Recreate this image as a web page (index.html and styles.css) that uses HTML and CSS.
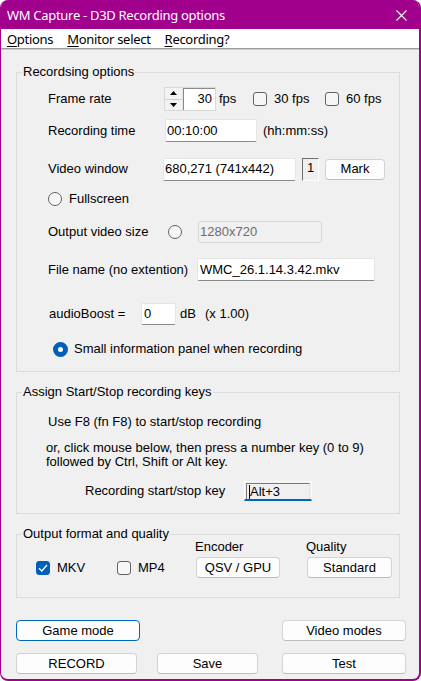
FILE: index.html
```html
<!DOCTYPE html>
<html lang="en">
<head>
<meta charset="utf-8">
<title>WM Capture - D3D Recording options</title>
<link rel="stylesheet" href="styles.css">
</head>
<body>
<div class="window">
  <div class="titlebar">
    <span class="title">WM Capture - D3D Recording options</span>
    <svg class="close" width="11" height="11" viewBox="0 0 11 11"><path d="M0.5 0.5L10.5 10.5M10.5 0.5L0.5 10.5" stroke="#fff" stroke-width="1.1" fill="none"/></svg>
  </div>
  <div class="menubar">
    <span class="menu"><u>O</u>ptions</span>
    <span class="menu"><u>M</u>onitor select</span>
    <span class="menu"><u>R</u>ecording?</span>
  </div>

  <div class="client">
    <fieldset class="group rec">
      <legend>Recordsing options</legend>

      <div class="row r-rate">
        <span class="lbl lbl-rate">Frame rate</span>
        <div class="spin">
          <div class="spin-btns">
            <span class="spin-btn"><svg width="7" height="4" viewBox="0 0 7 4"><path d="M3.5 0L7 4H0z" fill="#000"/></svg></span>
            <span class="spin-btn"><svg width="7" height="4" viewBox="0 0 7 4"><path d="M0 0H7L3.5 4z" fill="#000"/></svg></span>
          </div>
          <div class="spin-val">30</div>
        </div>
        <span class="fps-unit">fps</span>
        <label class="check c30"><span class="box"></span>30 fps</label>
        <label class="check"><span class="box"></span>60 fps</label>
      </div>

      <div class="row r-time">
        <span class="lbl lbl-time">Recording time</span>
        <div class="field f-time">00:10:00</div>
        <span class="hint">(hh:mm:ss)</span>
      </div>

      <div class="row r-window">
        <span class="lbl lbl-window">Video window</span>
        <div class="field f-window">680,271 (741x442)</div>
        <div class="monitor-no">1</div>
        <button class="btn btn-mark">Mark</button>
      </div>

      <div class="row r-full">
        <label class="radio-lbl"><span class="radio"></span>Fullscreen</label>
      </div>

      <div class="row r-outsize">
        <span class="lbl lbl-outsize">Output video size</span>
        <span class="radio"></span>
        <div class="field disabled f-outsize">1280x720</div>
      </div>

      <div class="row r-file">
        <span class="lbl lbl-file">File name (no extention)</span>
        <div class="field f-file">WMC_26.1.14.3.42.mkv</div>
      </div>

      <div class="row r-boost">
        <span class="lbl lbl-boost">audioBoost =</span>
        <div class="field f-boost">0</div>
        <span class="db">dB</span>
        <span>(x 1.00)</span>
      </div>

      <div class="row r-panel">
        <label class="radio-lbl"><span class="radio on"></span>Small information panel when recording</label>
      </div>
    </fieldset>

    <fieldset class="group keys">
      <legend>Assign Start/Stop recording keys</legend>
      <p class="note-f8">Use F8 (fn F8) to start/stop recording</p>
      <p class="note-mouse">or, click mouse below, then press a number key (0 to 9)<br>followed by Ctrl, Shift or Alt key.</p>
      <div class="row r-key">
        <span class="lbl lbl-key">Recording start/stop key</span>
        <div class="keybox"><div class="keyin"><span class="caret"></span>Alt+3</div></div>
      </div>
    </fieldset>

    <fieldset class="group output">
      <legend>Output format and quality</legend>
      <div class="out-grid">
        <span class="head head-enc">Encoder</span>
        <span class="head head-q">Quality</span>
        <label class="check mkv"><span class="box on"><svg width="10" height="8" viewBox="0 0 10 8"><path d="M1 4.2L3.8 7L9 1" stroke="#fff" stroke-width="1.3" fill="none"/></svg></span>MKV</label>
        <label class="check mp4"><span class="box"></span>MP4</label>
        <button class="btn btn-enc">QSV / GPU</button>
        <button class="btn btn-q">Standard</button>
      </div>
    </fieldset>

    <div class="actions">
      <button class="btn act focus btn-game">Game mode</button>
      <button class="btn act btn-vmodes">Video modes</button>
      <button class="btn act btn-record">RECORD</button>
      <button class="btn act btn-save">Save</button>
      <button class="btn act btn-test">Test</button>
    </div>
  </div>
</div>
</body>
</html>
```

FILE: styles.css
```css
* { box-sizing: border-box; }

html, body {
  margin: 0;
  padding: 0;
  background: #ffffff;
}

body {
  font-family: "Liberation Sans", Arial, sans-serif;
  font-size: 13px;
  line-height: 16px;
  color: #000;
}

/* Window frame */
.window {
  width: 421px;
  height: 681px;
  background: #f0f0f0;
  border: solid #a0008c;
  border-width: 0 2px 2px 1px;
  border-radius: 8px;
  overflow: hidden;
  display: flex;
  flex-direction: column;
}

.titlebar {
  height: 29px;
  flex: none;
  background: #a0008c;
  display: flex;
  align-items: center;
  justify-content: space-between;
  padding: 1px 12px 0 6px;
}

.title {
  font-family: "Noto Sans", "Open Sans", sans-serif;
  font-size: 13px;
  letter-spacing: -0.3px;
  color: #fff;
  line-height: 16px;
}

.close { display: block; }

.menubar {
  height: 20px;
  flex: none;
  background: #fff;
  border-bottom: 1px solid #9c9c9c;
  display: flex;
  align-items: center;
  gap: 14px;
  padding-left: 6px;
  font-family: "Noto Sans", "Open Sans", sans-serif;
  font-size: 13px;
  letter-spacing: -0.3px;
}

.menu u { text-underline-offset: 2px; }

.client {
  flex: 1;
  border-top: 1px solid #cdcdcd;
  padding: 14px 19px 0 15px;
  display: flex;
  flex-direction: column;
}

/* Group boxes */
.group {
  margin: 0;
  padding: 0;
  min-width: 0;
  border: 1px solid #dcdcdc;
}

.group legend {
  margin-left: 5px;
  padding: 0 1px;
  line-height: 16px;
}

.row {
  display: flex;
  align-items: center;
}

.lbl { flex: none; }

/* Recording options */
.rec { padding: 7px 0 14px 0; }

.r-rate { height: 24px; padding-left: 31px; }
.lbl-rate { width: 116px; }

.spin {
  display: flex;
  height: 24px;
  width: 52px;
  border: 1px solid #d8d8d8;
}

.spin-btns {
  width: 18px;
  display: flex;
  flex-direction: column;
  border-right: 1px solid #e4e4e4;
}

.spin-btn {
  flex: 1;
  display: flex;
  align-items: center;
  justify-content: center;
  background: #f3f3f3;
}

.spin-btn + .spin-btn { border-top: 1px solid #cfcfcf; }

.spin-val {
  flex: 1;
  background: #fff;
  border-top: 1px solid #8a8a8a;
  border-left: 1px solid #8a8a8a;
  text-align: right;
  padding-right: 3px;
  line-height: 20px;
}

.fps-unit { width: 37px; padding-left: 3px; }

.check {
  display: inline-flex;
  align-items: center;
  gap: 7px;
}

.c30 { width: 72px; }

.box {
  width: 14px;
  height: 14px;
  border: 1px solid #626262;
  border-radius: 3px;
  background: #f6f6f6;
  display: flex;
  align-items: center;
  justify-content: center;
}

.box.on {
  background: #005fb8;
  border-color: #005fb8;
}

.field {
  height: 100%;
  background: #fff;
  border: 1px solid #e5e5e5;
  border-bottom-color: #8a8a8a;
  border-radius: 2px;
  display: flex;
  align-items: center;
  padding-left: 1px;
}

.field.disabled {
  background: #f0f0f0;
  border: 1px solid #d9d9d9;
  color: #6d6d6d;
}

.r-time { height: 23px; margin-top: 8px; padding-left: 31px; }
.lbl-time { width: 117px; }
.f-time { width: 92px; }
.hint { margin-left: 6px; }

.r-window { height: 24px; margin-top: 15px; padding-left: 31px; }
.lbl-window { width: 115px; }
.f-window { width: 133px; height: 23px; }

.monitor-no {
  width: 17px;
  height: 23px;
  margin-left: 6px;
  border-top: 1px solid #707070;
  border-left: 1px solid #707070;
  border-right: 1px solid #ffffff;
  border-bottom: 1px solid #ffffff;
  padding-left: 4px;
  line-height: 18px;
}

.r-full { height: 16px; margin-top: 10px; padding-left: 31px; }

.radio-lbl {
  display: inline-flex;
  align-items: center;
  gap: 7px;
}

.radio {
  width: 14px;
  height: 14px;
  flex: none;
  border: 1px solid #626262;
  border-radius: 50%;
  background: #f6f6f6;
}

.radio.on {
  width: 15px;
  height: 15px;
  border: 5px solid #005fb8;
  background: #fff;
}

.r-outsize { height: 22px; margin-top: 14px; padding-left: 31px; }
.lbl-outsize { width: 120px; }
.f-outsize { width: 124px; margin-left: 16px; padding-left: 1px; }

.r-file { height: 23px; margin-top: 15px; padding-left: 31px; }
.lbl-file { width: 149px; }
.f-file { width: 178px; padding-left: 2px; }

.r-boost { height: 22px; margin-top: 22px; padding-left: 32px; }
.lbl-boost { width: 92px; }
.f-boost { width: 35px; padding-left: 2px; }
.db { width: 29px; padding-left: 4px; }

.r-panel { height: 16px; margin-top: 16px; padding-left: 36px; }
.r-panel .radio-lbl { gap: 6px; }

/* Start/stop keys */
.keys {
  margin-top: 12px;
  padding: 14px 0 12px 0;
}

.keys p { margin: 0; }

.note-f8 { padding-left: 31px; }

.keys .note-mouse {
  margin-top: 11px;
  padding-left: 29px;
  line-height: 14px;
}

.r-key { height: 20px; margin-top: 12px; padding-left: 68px; }
.lbl-key { width: 159px; }

.keybox {
  width: 68px;
  height: 20px;
  border: 1px solid #fafafa;
  border-bottom: 2px solid #0067c0;
  padding: 1px 1px 0 1px;
}

.keyin {
  height: 100%;
  background: #f0f0f0;
  border-top: 1px solid #7a7a7a;
  border-left: 1px solid #7a7a7a;
  border-right: 1px solid #e3e3e3;
  display: flex;
  align-items: center;
  padding-left: 2px;
  line-height: 14px;
}

.caret {
  width: 1px;
  height: 14px;
  background: #000;
}

/* Output format */
.output {
  margin-top: 12px;
  padding: 0 0 19px 0;
}

.out-grid {
  display: grid;
  grid-template-columns: 81px 78px 111px 1fr;
  grid-template-rows: 14px 21px;
  row-gap: 3px;
  margin: -2px 0 0 19px;
  align-items: center;
}

.head { line-height: 14px; }
.head-enc { grid-column: 3; grid-row: 1; }
.head-q { grid-column: 4; grid-row: 1; }
.mkv { grid-column: 1; grid-row: 2; }
.mp4 { grid-column: 2; grid-row: 2; }
.btn-enc { grid-column: 3; grid-row: 2; width: 84px; margin-left: 1px; }
.btn-q { grid-column: 4; grid-row: 2; width: 85px; margin-left: 1px; }

/* Buttons */
.btn {
  font-family: "Liberation Sans", Arial, sans-serif;
  font-size: 13px;
  color: #000;
  height: 21px;
  padding: 0;
  background: #fdfdfd;
  border: 1px solid #d3d3d3;
  border-bottom-color: #bdbdbd;
  border-radius: 4px;
  line-height: 18px;
}

.btn-mark { width: 60px; height: 21px; margin-left: 6px; }

.btn.focus { border-color: #0067c0; }

.actions {
  display: grid;
  grid-template-columns: 141px 125px 124px;
  grid-template-rows: 21px 21px;
  row-gap: 12px;
  margin-top: 22px;
}

.btn-game { grid-column: 1; grid-row: 1; width: 124px; }
.btn-vmodes { grid-column: 3; grid-row: 1; width: 124px; }
.btn-record { grid-column: 1; grid-row: 2; width: 121px; }
.btn-save { grid-column: 2; grid-row: 2; width: 101px; }
.btn-test { grid-column: 3; grid-row: 2; width: 124px; }
```
